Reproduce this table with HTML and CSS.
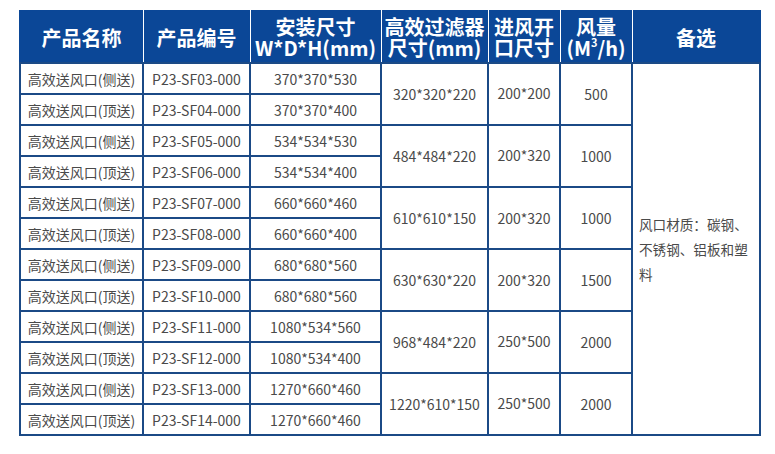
FILE: index.html
```html
<!DOCTYPE html>
<html lang="zh-CN">
<head>
<meta charset="utf-8">
<link rel="stylesheet" href="styles.css">
</head>
<body>
<table class="spec">
  <colgroup>
    <col class="c1"><col class="c2"><col class="c3"><col class="c4"><col class="c5"><col class="c6"><col class="c7">
  </colgroup>
  <thead>
    <tr class="head">
      <th>产品名称</th>
      <th>产品编号</th>
      <th>安装尺寸<br>W*D*H(mm)</th>
      <th>高效过滤器<br>尺寸(mm)</th>
      <th>进风开<br>口尺寸</th>
      <th>风量<br>(M<sup>3</sup>/h)</th>
      <th>备选</th>
    </tr>
  </thead>
  <tbody>
    <tr><td>高效送风口(侧送)</td><td>P23-SF03-000</td><td>370*370*530</td><td rowspan="2">320*320*220</td><td rowspan="2" class="up">200*200</td><td rowspan="2">500</td><td rowspan="12" class="note">风口材质：碳钢、不锈钢、铝板和塑料</td></tr>
    <tr><td>高效送风口(顶送)</td><td>P23-SF04-000</td><td>370*370*400</td></tr>
    <tr><td>高效送风口(侧送)</td><td>P23-SF05-000</td><td>534*534*530</td><td rowspan="2">484*484*220</td><td rowspan="2" class="up">200*320</td><td rowspan="2">1000</td></tr>
    <tr><td>高效送风口(顶送)</td><td>P23-SF06-000</td><td>534*534*400</td></tr>
    <tr><td>高效送风口(侧送)</td><td>P23-SF07-000</td><td>660*660*460</td><td rowspan="2">610*610*150</td><td rowspan="2">200*320</td><td rowspan="2">1000</td></tr>
    <tr><td>高效送风口(顶送)</td><td>P23-SF08-000</td><td>660*660*400</td></tr>
    <tr><td>高效送风口(侧送)</td><td>P23-SF09-000</td><td>680*680*560</td><td rowspan="2">630*630*220</td><td rowspan="2">200*320</td><td rowspan="2">1500</td></tr>
    <tr><td>高效送风口(顶送)</td><td>P23-SF10-000</td><td>680*680*560</td></tr>
    <tr><td>高效送风口(侧送)</td><td>P23-SF11-000</td><td>1080*534*560</td><td rowspan="2">968*484*220</td><td rowspan="2" class="up">250*500</td><td rowspan="2">2000</td></tr>
    <tr><td>高效送风口(顶送)</td><td>P23-SF12-000</td><td>1080*534*400</td></tr>
    <tr><td>高效送风口(侧送)</td><td>P23-SF13-000</td><td>1270*660*460</td><td rowspan="2">1220*610*150</td><td rowspan="2" class="up">250*500</td><td rowspan="2">2000</td></tr>
    <tr><td>高效送风口(顶送)</td><td>P23-SF14-000</td><td>1270*660*460</td></tr>
  </tbody>
</table>
</body>
</html>
```

FILE: styles.css
```css
html, body {
  margin: 0;
  padding: 0;
  background: #ffffff;
}

body {
  padding: 10px 0 0 19px;
  font-family: "Noto Sans CJK SC", "Noto Sans", sans-serif;
}

.spec {
  border-collapse: collapse;
  table-layout: fixed;
  width: 742px;
  border: 2px solid #1b4a86;
}

.c1 { width: 123px; }
.c2 { width: 107px; }
.c3 { width: 131px; }
.c4 { width: 107px; }
.c5 { width: 72px; }
.c6 { width: 72px; }
.c7 { width: 128px; }

.head {
  height: 52px;
  background: #0b4797;
}

.head th {
  position: relative;
  padding: 0;
  color: #ffffff;
  font-size: 20px;
  font-weight: 700;
  line-height: 21px;
  text-align: center;
  vertical-align: middle;
  border: 2px solid #0b4797;
  border-bottom-color: #1b4a86;
  white-space: nowrap;
}

.head th + th::before {
  content: "";
  position: absolute;
  left: -1px;
  top: -2px;
  bottom: 0;
  width: 1px;
  background: #ffffff;
}

.head sup {
  font-size: 11px;
  line-height: 0;
  vertical-align: 9px;
}

tbody tr {
  height: 31px;
}

tbody td {
  padding: 0;
  border: 2px solid #1b4a86;
  color: #4a4a4a;
  font-size: 14px;
  line-height: 20px;
  text-align: center;
  vertical-align: middle;
  white-space: nowrap;
}

tbody td.up {
  padding-bottom: 3px;
}

tbody td.note {
  white-space: normal;
  text-align: left;
  padding: 0 6px 0 6px;
  line-height: 25px;
  font-size: 13.6px;
}
```
